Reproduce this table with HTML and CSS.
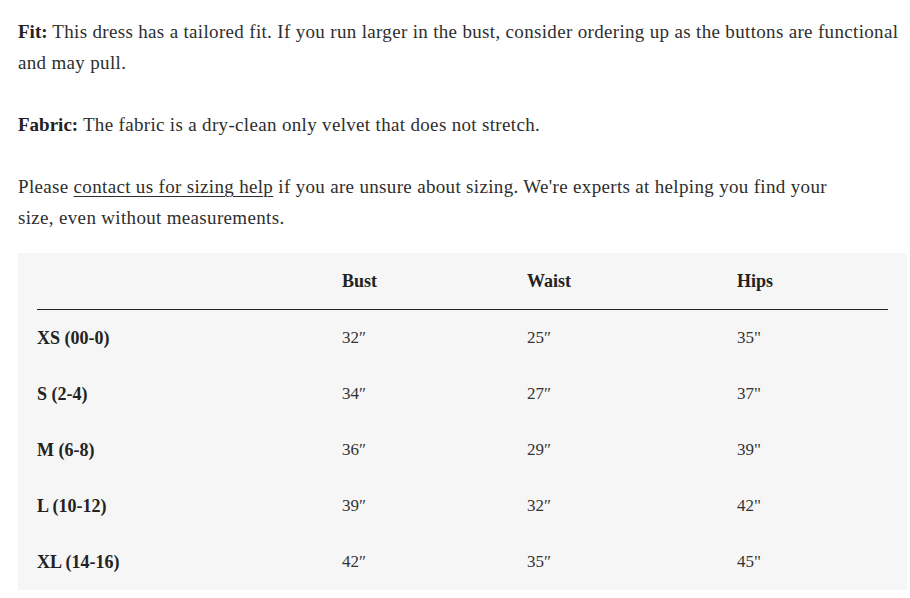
FILE: index.html
```html
<!DOCTYPE html>
<html>
<head>
<meta charset="utf-8">
<link rel="stylesheet" href="styles.css">
</head>
<body>
<div class="page">
  <p class="para"><strong>Fit:</strong> This dress has a tailored fit. If you run larger in the bust, consider ordering up as the buttons are functional and may pull.</p>
  <p class="para"><strong>Fabric:</strong> The fabric is a dry-clean only velvet that does not stretch.</p>
  <p class="para narrow">Please <a class="link" href="#">contact us for sizing help</a> if you are unsure about sizing. We're experts at helping you find your size, even without measurements.</p>
  <div class="table-wrap">
    <table class="sizes">
      <thead>
        <tr><th class="c1"></th><th class="c2">Bust</th><th class="c3">Waist</th><th class="c4">Hips</th></tr>
      </thead>
      <tbody>
        <tr><th>XS (00-0)</th><td>32″</td><td>25″</td><td>35"</td></tr>
        <tr><th>S (2-4)</th><td>34″</td><td>27″</td><td>37"</td></tr>
        <tr><th>M (6-8)</th><td>36″</td><td>29″</td><td>39"</td></tr>
        <tr><th>L (10-12)</th><td>39″</td><td>32″</td><td>42"</td></tr>
        <tr><th>XL (14-16)</th><td>42″</td><td>35″</td><td>45"</td></tr>
      </tbody>
    </table>
  </div>
</div>
</body>
</html>
```

FILE: styles.css
```css
html, body {
  margin: 0;
  padding: 0;
  background: #ffffff;
}
.page {
  padding: 16px 0 0 18px;
  font-family: "Liberation Serif", "DejaVu Serif", serif;
  color: #2e2e2e;
  font-size: 19px;
  letter-spacing: 0.33px;
  line-height: 31px;
}
.para {
  margin: 0 0 31px 0;
  width: 892px;
}
.para strong {
  font-weight: bold;
  color: #222;
  letter-spacing: 0;
}
.narrow {
  width: 845px;
  margin-bottom: 20px;
}
.link {
  color: #2e2e2e;
  text-decoration: underline;
  text-underline-offset: 3px;
  text-decoration-thickness: 1px;
}
.table-wrap {
  background: #f6f6f6;
  width: 889px;
  padding: 0 19px;
  box-sizing: border-box;
  letter-spacing: 0;
}
.sizes {
  width: 100%;
  border-collapse: collapse;
  font-size: 18px;
}
.sizes th, .sizes td {
  height: 56px;
  padding: 0;
  text-align: left;
  vertical-align: middle;
  line-height: 20px;
}
.sizes th {
  font-weight: bold;
  color: #222;
}
.sizes td {
  font-weight: normal;
  color: #333;
  font-size: 17px;
}
.sizes thead th {
  border-bottom: 1.5px solid #222;
}
.c1 { width: 305px; }
.c2 { width: 185px; }
.c3 { width: 210px; }
```
